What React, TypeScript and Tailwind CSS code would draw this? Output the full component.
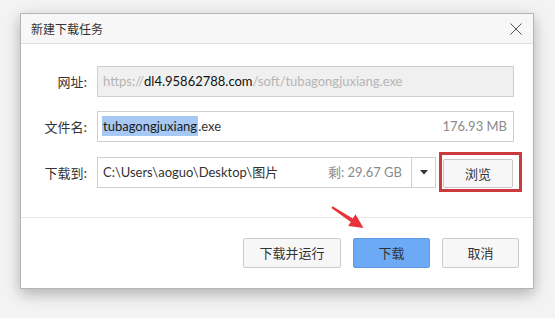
import React from "react";

const font = { fontFamily: 'Lato, "Noto Sans CJK SC", sans-serif' };
const cjk = { fontFamily: '"Noto Sans CJK SC", sans-serif' };

export default function App() {
  return (
    <div
      className="relative w-[555px] h-[318px] bg-[#f3f3f3] pt-[13px] pl-[20px] text-[#333]"
      style={font}
    >
      <div className="w-[514px] h-[276px] bg-white border border-[#b5b5b5] shadow-[0_5px_14px_rgba(0,0,0,0.28)] flex flex-col">
        {/* title bar */}
        <div className="h-[30px] shrink-0 bg-[#f7f7f7] border-b border-[#dedede] flex items-center justify-between pl-[10px] pr-[11px]">
          <span className="text-[12px] text-[#333] leading-none" style={cjk}>新建下载任务</span>
          <svg width="12" height="12" viewBox="0 0 12 12" className="text-[#555]">
            <path d="M0.5 0.5 L11.5 11.5 M11.5 0.5 L0.5 11.5" stroke="currentColor" strokeWidth="1" fill="none" />
          </svg>
        </div>

        {/* body */}
        <div className="flex-1 pt-[22px] flex flex-col text-[13px]">
          <div className="flex items-center h-[31px]">
            <div className="w-[67px] text-right pr-[1px] text-[#333]" style={cjk}>网址:</div>
            <div className="ml-[9px] w-[417px] h-[31px] border border-[#cfcfcf] bg-[#f0f0f0] flex items-center pl-[5px] whitespace-nowrap overflow-hidden">
              <span className="text-[#b5b5b5]">https://</span>
              <span className="text-[#111]">dl4.95862788.com</span>
              <span className="text-[#b5b5b5]">/soft/tubagongjuxiang.exe</span>
            </div>
          </div>

          <div className="flex items-center h-[31px] mt-[14px]">
            <div className="w-[67px] text-right pr-[1px] text-[#333]" style={cjk}>文件名:</div>
            <div className="ml-[9px] w-[417px] h-[31px] border border-[#cfcfcf] bg-white flex items-center justify-between pl-[4px] pr-[6px] whitespace-nowrap">
              <span>
                <span className="bg-[#a6c8f2] text-[#1a1a1a] py-[2px] px-[1px]">tubagongjuxiang</span>
                <span className="text-[#333]">.exe</span>
              </span>
              <span className="text-[#8a8a8a]">176.93 MB</span>
            </div>
          </div>

          <div className="flex items-center h-[31px] mt-[15px]">
            <div className="w-[67px] text-right pr-[1px] text-[#333]" style={cjk}>下载到:</div>
            <div className="ml-[9px] w-[339px] h-[31px] border border-[#cfcfcf] bg-white flex items-center whitespace-nowrap">
              <div className="flex-1 flex items-center justify-between pl-[5px] pr-[9px]">
                <span className="text-[#333]">C:\Users\aoguo\Desktop\图片</span>
                <span className="text-[#8a8a8a]">剩: 29.67 GB</span>
              </div>
              <div className="w-[24px] h-full border-l border-[#cfcfcf] flex items-center justify-center">
                <svg width="8" height="5" viewBox="0 0 8 5">
                  <path d="M0 0 L8 0 L4 4.5 Z" fill="#333" />
                </svg>
              </div>
            </div>
            <div className="relative ml-[7px]">
              <button className="w-[70px] h-[29px] mt-[2px] border border-[#c8c8c8] bg-[#f7f7f7] rounded-[2px] text-[13px] text-[#333] flex items-center justify-center" style={cjk}>
                浏览
              </button>
              <div className="absolute left-[-4px] right-[-9px] top-[-5px] bottom-[-4px] border-[3px] border-[#cc3a3d] pointer-events-none" />
            </div>
          </div>
        </div>

        {/* footer */}
        <div className="h-[71px] shrink-0 border-t border-[#e6e6e6] flex justify-end items-start pt-[20px] pr-[14px] gap-[12px] text-[13px]" style={cjk}>
          <button className="w-[98px] h-[30px] border border-[#cccccc] bg-[#f7f7f7] rounded-[2px] text-[#333] flex items-center justify-center">
            下载并运行
          </button>
          <button className="w-[77px] h-[30px] border border-[#5b9ae6] bg-[#6caaf6] rounded-[2px] text-[#333] flex items-center justify-center">
            下载
          </button>
          <button className="w-[77px] h-[30px] border border-[#cccccc] bg-[#f7f7f7] rounded-[2px] text-[#333] flex items-center justify-center">
            取消
          </button>
        </div>
      </div>

      {/* red annotation arrow */}
      <svg
        className="absolute left-[329px] top-[204px]"
        width="38"
        height="29"
        viewBox="0 0 38 29"
      >
        <polygon
          points="3.6,2.2 23.8,14.5 26.5,10.3 34.5,24 19.2,22 21.8,17.9 2.4,4"
          fill="#e8333a"
        />
      </svg>
    </div>
  );
}
